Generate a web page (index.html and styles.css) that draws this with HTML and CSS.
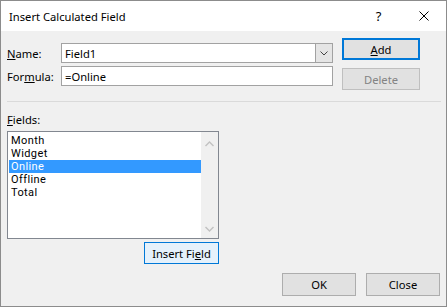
FILE: index.html
```html
<!DOCTYPE html>
<html lang="en">
  <head>
    <meta charset="UTF-8" />
    <title>Insert Calculated Field</title>
    <link rel="stylesheet" href="styles.css">
  </head>
  <body>
    <div class="dialog">
      <div class="titlebar">
        <span class="title">Insert Calculated Field</span>
        <span class="caption-btn help">?</span>
        <span class="caption-btn">
          <svg width="10" height="10" viewBox="0 0 10 10">
            <path d="M0.5 0.5 L9.5 9.5 M9.5 0.5 L0.5 9.5" stroke="#000" stroke-width="1" fill="none" />
          </svg>
        </span>
      </div>

      <div class="content">
        <div class="top">
          <div class="form">
            <label class="form-label"><u>N</u>ame:</label>
            <div class="combo">
              <span class="combo-value">Field1</span>
              <span class="combo-drop">
                <svg width="8" height="5" viewBox="0 0 8 5">
                  <path d="M0.5 0.5 L4 4 L7.5 0.5" stroke="#444" stroke-width="1" fill="none" />
                </svg>
              </span>
            </div>
            <label class="form-label">For<u>m</u>ula:</label>
            <div class="textbox">=Online</div>
          </div>
          <div class="side">
            <button class="btn btn-default"><u>A</u>dd</button>
            <button class="btn" disabled>Delete</button>
          </div>
        </div>

        <div class="separator"></div>

        <div class="fields">
          <div class="form-label"><u>F</u>ields:</div>
          <div class="listbox">
            <ul class="items">
              <li>Month</li>
              <li>Widget</li>
              <li class="selected">Online</li>
              <li>Offline</li>
              <li>Total</li>
            </ul>
            <div class="scrollbar">
              <svg width="9" height="6" viewBox="0 0 9 6">
                <path d="M0.5 5 L4.5 1 L8.5 5" stroke="#c2c2c2" stroke-width="1.4" fill="none" />
              </svg>
              <svg width="9" height="6" viewBox="0 0 9 6">
                <path d="M0.5 1 L4.5 5 L8.5 1" stroke="#c2c2c2" stroke-width="1.4" fill="none" />
              </svg>
            </div>
          </div>
          <button class="btn btn-insert">Insert Fi<u>e</u>ld</button>
        </div>

        <div class="footer">
          <button class="btn btn-footer">OK</button>
          <button class="btn btn-footer">Close</button>
        </div>
      </div>
    </div>
  </body>
</html>
```

FILE: styles.css
```css
* {
  margin: 0;
  padding: 0;
  box-sizing: border-box;
  font-family: "Noto Sans", "Open Sans", sans-serif;
}

body {
  width: 447px;
  height: 307px;
  background: #f0f0f0;
}

.dialog {
  width: 447px;
  height: 307px;
  border: 1px solid #8c8c8c;
  background: #f0f0f0;
  color: #000;
  font-size: 11px;
}

.titlebar {
  height: 30px;
  background: #fff;
  display: flex;
  align-items: center;
}

.title {
  flex: 1;
  padding-left: 8px;
  font-size: 11.2px;
}

.caption-btn {
  width: 45px;
  height: 30px;
  display: flex;
  align-items: center;
  justify-content: center;
}

.help {
  font-size: 13px;
}

.content {
  padding: 7px 5px 0 6px;
}

.top {
  display: flex;
}

.form {
  margin-top: 5px;
  display: grid;
  grid-template-columns: 54px 272px;
  grid-auto-rows: 20px;
  row-gap: 3px;
  align-items: center;
}

.form-label {
  font-size: 11.2px;
}

.combo,
.textbox {
  height: 20px;
  border: 1px solid #a2a2a2;
  background: #fff;
  display: flex;
  align-items: center;
  font-size: 11.2px;
}

.textbox {
  height: 20px;
  padding-left: 3px;
}

.combo-value {
  flex: 1;
  padding-left: 3px;
}

.combo-drop {
  width: 17px;
  height: 18px;
  border-left: 1px solid #a2a2a2;
  background: #e5e5e5;
  display: flex;
  align-items: center;
  justify-content: center;
}

.side {
  margin-left: 9px;
  display: flex;
  flex-direction: column;
  gap: 8px;
}

.btn {
  width: 78px;
  height: 22px;
  background: #e1e1e1;
  border: 1px solid #adadad;
  font-size: 11.2px;
  color: #000;
}

.btn:disabled {
  border-color: #bfbfbf;
  color: #838383;
}

.btn-default {
  border: 2px solid #0078d7;
}

.separator {
  margin-top: 11px;
  height: 1px;
  background: #dadada;
}

.fields {
  width: 212px;
  margin-top: 10px;
  display: flex;
  flex-direction: column;
}

.fields .form-label {
  height: 16px;
  line-height: 16px;
}

.listbox {
  margin-top: 3px;
  height: 108px;
  border: 1px solid #828790;
  background: #fff;
  display: flex;
  padding: 1px 0 0 1px;
}

.items {
  list-style: none;
  flex: 1;
  padding-top: 1px;
}

.items li {
  height: 13px;
  line-height: 13px;
  padding-left: 2px;
  font-family: Roboto, "Noto Sans", sans-serif;
  font-size: 11px;
  letter-spacing: 0.4px;
}

.items li.selected {
  background: #3399ff;
  color: #fff;
}

.scrollbar {
  width: 17px;
  margin-top: -1px;
  background: #f0f0f0;
  display: flex;
  flex-direction: column;
  justify-content: space-between;
  align-items: center;
  padding: 9px 0 6px;
}

.btn-insert {
  align-self: flex-end;
  width: 75px;
  margin-top: 3px;
  border-color: #0078d7;
  background: #e5f1fb;
}

.footer {
  margin-top: 9px;
  margin-right: 1px;
  display: flex;
  justify-content: flex-end;
  gap: 10px;
}

.btn-footer {
  width: 74px;
  height: 23px;
}
```
